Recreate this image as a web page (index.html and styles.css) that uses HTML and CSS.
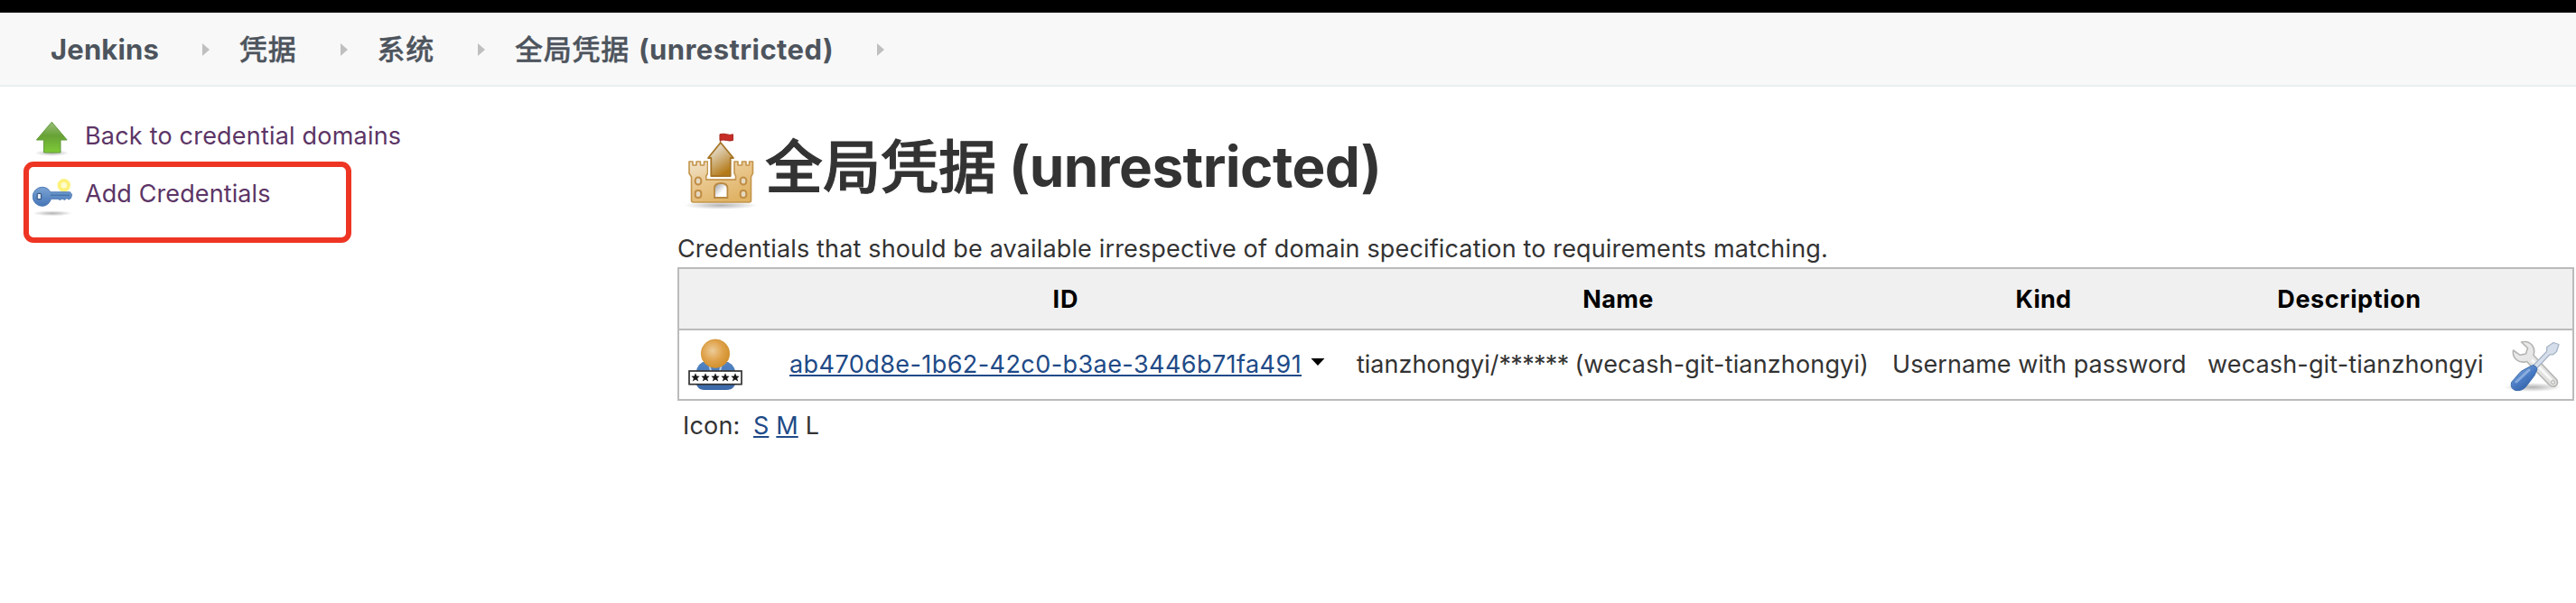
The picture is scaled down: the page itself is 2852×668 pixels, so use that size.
FILE: index.html
```html
<!DOCTYPE html>
<html lang="zh">
<head>
<meta charset="utf-8">
<title>全局凭据 (unrestricted) [Jenkins]</title>
<link rel="stylesheet" href="styles.css">
</head>
<body>
<div class="topbar"></div>
<nav class="breadcrumbs">
  <a class="crumb crumb-root">Jenkins</a>
  <i class="sep"></i>
  <a class="crumb cjk">凭据</a>
  <i class="sep"></i>
  <a class="crumb cjk">系统</a>
  <i class="sep"></i>
  <a class="crumb"><span class="cjk">全局凭据</span> <span class="crumb-latin">(unrestricted)</span></a>
  <i class="sep sep-last"></i>
</nav>
<div class="page">
  <aside class="side">
    <a class="task task-back">
      <svg width="44" height="44" viewBox="0 0 44 44">
        <defs>
          <linearGradient id="ga" x1="0" y1="0" x2="0" y2="1"><stop offset="0" stop-color="#9cbf7c"/><stop offset=".45" stop-color="#66a235"/><stop offset="1" stop-color="#7fcb37"/></linearGradient>
          <radialGradient id="sh"><stop offset="0" stop-color="#000" stop-opacity=".3"/><stop offset="1" stop-color="#000" stop-opacity="0"/></radialGradient>
        </defs>
        <ellipse cx="21.5" cy="39.5" rx="19" ry="3.5" fill="url(#sh)"/>
        <path d="M21.3 5.2 38.2 25H31v14H12.6V25H4.4Z" fill="url(#ga)" stroke="#629a3a" stroke-width="1" stroke-linejoin="round"/>
      </svg>
      <span>Back to credential domains</span>
    </a>
    <a class="task task-add">
      <svg width="46" height="52" viewBox="0 0 46 52">
        <defs><linearGradient id="gk" x1="0" y1="0" x2="0" y2="1"><stop offset="0" stop-color="#7ba3d3"/><stop offset="1" stop-color="#4676b8"/></linearGradient></defs>
        <ellipse cx="22" cy="46.3" rx="22" ry="3" fill="url(#sh)"/>
        <circle cx="34.8" cy="15.3" r="5.2" fill="#fffbd0" stroke="#fcf27a" stroke-width="4"/>
        <path d="M10.800 17.300c4.300 0 7.200 2.200 9 5.500H41.500L43.600 25.500 42.500 29.500 40 31 38 29.500 35.500 31.500 33 30 30.500 31.500 28 30.300H20.500C19 35 15.500 38.300 10.800 38.300A10.500 10.500 0 0 1 10.800 17.300Z" fill="url(#gk)" stroke="#4b78b4" stroke-width="1"/>
        <path d="M20 26.200H41" stroke="#416ca6" stroke-width="1.200"/>
        <rect x="5.200" y="24.300" width="4.400" height="6.400" rx="1" fill="#e9edf2" stroke="#3d5f8f" stroke-width="1.300"/>
      </svg>
      <span>Add Credentials</span>
    </a>
    <div class="highlight"></div>
  </aside>
  <main class="main">
    <h1>
      <svg width="80" height="86" viewBox="0 0 80 86">
        <defs>
          <linearGradient id="gt" x1="0" y1="0" x2=".5" y2="1"><stop offset="0" stop-color="#f4f0e8"/><stop offset=".35" stop-color="#dccdb0"/><stop offset="1" stop-color="#b57a17"/></linearGradient>
          <linearGradient id="gw" x1="0" y1="0" x2=".6" y2="1"><stop offset="0" stop-color="#f1e5cf"/><stop offset=".5" stop-color="#e9c68c"/><stop offset="1" stop-color="#e0b365"/></linearGradient>
          <linearGradient id="gd" x1="0" y1="0" x2="1" y2="1"><stop offset=".1" stop-color="#aaa"/><stop offset=".6" stop-color="#fff"/></linearGradient>
        </defs>
        <ellipse cx="40" cy="80.500" rx="41" ry="4.500" fill="url(#sh)"/>
        <path d="M39.500 2v10" stroke="#a56a4a" stroke-width="1.300"/>
        <path d="M39 1.800q4-1.200 7.500 0t7 0v6.700q-3.500 1-7 0t-7.500 0Z" fill="#c82c26" stroke="#aa2720" stroke-width="1"/>
        <path d="M5 32h4v4h4v-4h4.500v4h4v-4h4v13l-1.700 3v4H56.500v-4l-1.500-3V32h4v4h4.500v-4H68v4h3.500v-4h4v13l-2 4v26q0 2-2 2h-62q-2 0-2-2V49l-2.500-4Z" fill="url(#gw)" stroke="#c4944b" stroke-width="1.600" stroke-linejoin="round"/>
        <path d="M26 51.500V29h28v22.500Z" fill="#fff"/>
        <path d="M23.800 52H56.500" stroke="#c4944b" stroke-width="1.600"/>
        <path d="M39.800 11 54 28h-3.300v20H29.300V28H26Z" fill="url(#gt)" stroke="#a67425" stroke-width="1.800" stroke-linejoin="round"/>
        <path d="M33 72V61.500q0-5.500 7.200-5.500t7.200 5.500V72Z" fill="url(#gd)" stroke="#b88942" stroke-width="1.800"/>
        <g fill="#e5d9c2" stroke="#c08d43" stroke-width="2"><rect x="11.700" y="49.500" width="6.600" height="8" rx="3.300"/><rect x="11.700" y="64" width="6.600" height="8" rx="3"/><rect x="61.700" y="49.500" width="6.600" height="8" rx="3.300"/><rect x="61.700" y="64" width="6.600" height="8" rx="3"/></g>
      </svg>
      <span class="h-cjk">全局凭据</span> <span class="h-latin">(unrestricted)</span>
    </h1>
    <p class="intro">Credentials that should be available irrespective of domain specification to requirements matching.</p>
    <table class="creds">
      <colgroup><col class="c1"><col class="c2"><col class="c3"><col class="c4"><col class="c5"><col class="c6"></colgroup>
      <thead>
        <tr><th></th><th class="th-id">ID</th><th class="th-name">Name</th><th>Kind</th><th class="th-desc">Description</th><th></th></tr>
      </thead>
      <tbody>
        <tr>
          <td class="td-icon">
            <svg width="62" height="60" viewBox="0 0 62 60">
              <defs>
                <radialGradient id="gh" cx=".4" cy=".4" r=".6"><stop offset="0" stop-color="#edcc9a"/><stop offset=".6" stop-color="#dfa24a"/><stop offset="1" stop-color="#d3922f"/></radialGradient>
                <linearGradient id="gb" x1="0" y1="0" x2="0" y2="1"><stop offset="0" stop-color="#5285c4"/><stop offset="1" stop-color="#3b68a8"/></linearGradient>
                <path id="st" d="M0-5 1.300-1.800 4.700-1.600 2.100.700 3.200 4.200 0 2.300-3.200 4.200-2.100.700-4.700-1.600-1.300-1.800Z"/>
              </defs>
              <path d="M16 26H44Q53 30 53 44 53 57 42 57H18Q8 57 8 44 8 30 16 26Z" fill="url(#gb)"/>
              <path d="M23 28l2 8M37 28l-2 8" stroke="#b9cee8" stroke-width="2"/>
              <circle cx="30" cy="16.700" r="15.700" fill="url(#gh)" stroke="#cf9234" stroke-width=".8"/>
              <rect x="1" y="36" width="58" height="14.700" fill="#fff" stroke="#333" stroke-width="1.700"/>
              <g fill="#151515"><use href="#st" x="8" y="43.300"/><use href="#st" x="19" y="43.300"/><use href="#st" x="30" y="43.300"/><use href="#st" x="41" y="43.300"/><use href="#st" x="52" y="43.300"/></g>
            </svg>
          </td>
          <td class="td-id"><a class="id-link">ab470d8e-1b62-42c0-b3ae-3446b71fa491</a><svg class="caret" width="16" height="10" viewBox="0 0 16 10"><path d="M.5 1H15.500L8 9Z" fill="#000"/></svg></td>
          <td class="td-name">tianzhongyi/<span class="mask">****** </span><span class="alias">(wecash-git-tianzhongyi)</span></td>
          <td class="td-kind">Username with password</td>
          <td class="td-desc">wecash-git-tianzhongyi</td>
          <td class="td-tools">
            <svg width="66" height="62" viewBox="0 0 66 62">
              <defs>
                <linearGradient id="gs" x1="0" y1="0" x2="1" y2="1"><stop offset="0" stop-color="#ececec"/><stop offset="1" stop-color="#dcdcda"/></linearGradient>
                <linearGradient id="gn" x1=".2" y1=".1" x2=".8" y2=".9"><stop offset="0" stop-color="#7fa6da"/><stop offset=".5" stop-color="#4a7cc4"/><stop offset="1" stop-color="#2f5da5"/></linearGradient>
              </defs>
              <ellipse cx="32" cy="55" rx="32" ry="5" fill="url(#sh)"/>
              <path d="M19.500 5Q27 3 31.500 8.500 35 13.500 33 19.500L58.500 46.500Q61 50.500 57.500 53.500 54 55.500 50.500 52.500L25.500 26.500Q18.500 28.500 14 24.500 9.500 20.500 10.500 14L18 19.300 24.500 18 26.500 11.500Z" fill="url(#gs)" stroke="#b4b4b2" stroke-width="1.600" stroke-linejoin="round"/>
              <path d="M31 24.500 53 47" stroke="#f8f8f8" stroke-width="3"/>
              <circle cx="54.500" cy="49.500" r="1.800" fill="#f4f4f4" stroke="#aaa"/>
              <path d="M32.500 31 47.500 15.500 47.800 10.500 55 5.500 61 7.500 58.500 15.500 55 18.500 51 18.800 36 34.500Z" fill="#d5deea" stroke="#a7b4c6" stroke-width="1.300" stroke-linejoin="round"/>
              <path d="M30 31.500Q33 29 36 32.500 38 35.500 35.500 38.500L34 42 24.500 54.500Q20 59.500 13 58.500 7 56.500 8.500 49.500L19 37.500Z" fill="url(#gn)" stroke="#3f6cae" stroke-width="1"/>
              <path d="M14 49 28 36" stroke="#a5c3ea" stroke-width="3" stroke-linecap="round" opacity=".65"/>
            </svg>
          </td>
        </tr>
      </tbody>
    </table>
    <div class="sizes"><span class="sizes-label">Icon:</span><a>S</a><a>M</a><span>L</span></div>
  </main>
</div>
</body>
</html>
```
FILE: styles.css
```css
body {
  margin: 0;
  background: #fff;
  color: #333;
  font: 27px/36px Inter, "Noto Sans CJK SC", sans-serif;
}
svg { display: block; flex: none; }

.topbar { height: 14px; background: #000; }

.breadcrumbs {
  display: flex;
  align-items: center;
  box-sizing: border-box;
  height: 82px;
  padding: 2px 0 0 56px;
  background: #f8f8f8;
  border-bottom: 2px solid #e9eff3;
  color: #4d545d;
  font-size: 31px;
  font-weight: 700;
  line-height: 78px;
  white-space: nowrap;
}
.crumb-root { letter-spacing: .15px; width: 120px; }
.crumb { display: flex; }
.cjk { letter-spacing: .75px; font-weight: 500; -webkit-text-stroke: .4px; }
.crumb-latin { margin-left: 10px; letter-spacing: .43px; }
.sep {
  width: 0;
  height: 0;
  margin: 0 33px 0 48px;
  border: solid transparent;
  border-width: 7px 0 7px 8px;
  border-left-color: #bfbfbf;
}
.sep-last { margin-right: 0; }

.page { display: flex; }
.side {
  position: relative;
  width: 750px;
  flex: none;
  padding-top: 24px;
  color: #5c3566;
}
.task { display: flex; height: 64px; padding-left: 36px; line-height: 62px; }
.task span { margin-left: 14px; letter-spacing: .2px; }
.task-back svg { margin-top: 10px; }
.task-add svg { margin-top: 6px; }
.task-add span { margin-left: 12px; letter-spacing: .1px; }
.highlight {
  position: absolute;
  left: 26px;
  top: 83px;
  width: 351px;
  height: 78px;
  border: 6px solid #ee3524;
  border-radius: 11px;
}

.main { width: 2100px; padding-top: 51px; }
h1 {
  display: flex;
  height: 107px;
  margin: 0;
  padding-left: 8px;
  font-size: 62px;
  line-height: 76px;
  white-space: nowrap;
}
.h-cjk { margin-left: 9px; font-size: 64px; font-weight: 500; -webkit-text-stroke: 1px; }
.h-latin { margin-left: 14px; letter-spacing: -.57px; }
.intro {
  box-sizing: border-box;
  height: 42px;
  margin: 0;
  padding-top: 4px;
  letter-spacing: .149px;
  white-space: nowrap;
}

.creds {
  box-sizing: border-box;
  width: 2100px;
  table-layout: fixed;
  border-collapse: separate;
  border-spacing: 0;
  border: 2px solid #bbb;
  white-space: nowrap;
}
.c1 { width: 114px; }
.c2 { width: 628px; }
.c3 { width: 595px; }
.c4 { width: 347px; }
.c5 { width: 330px; }
.c6 { width: 82px; }
th {
  height: 68px;
  padding: 2px 0 0;
  box-sizing: border-box;
  background: #f0f0f0;
  border-bottom: 2px solid #bbb;
  color: #000;
  letter-spacing: .25px;
}
.th-id { letter-spacing: .9px; }
.th-name { letter-spacing: .37px; }
.th-desc { letter-spacing: .61px; }
td { height: 76px; padding: 0; box-sizing: border-box; }
.td-icon { padding: 2px 0 0 10px; }
.td-id { padding-left: 8px; }
.id-link {
  color: #204a87;
  letter-spacing: .43px;
  text-decoration: underline;
  text-decoration-thickness: 2px;
  text-underline-offset: 2px;
  text-decoration-skip-ink: none;
}
.caret { display: inline-block; margin-left: 10px; vertical-align: 7px; }
.td-name { padding-left: 8px; }
.mask { letter-spacing: -.7px; }
.alias { letter-spacing: .15px; }
.td-kind { padding-left: 6px; letter-spacing: .06px; }
.td-desc { padding-left: 8px; letter-spacing: .15px; }
.td-tools { padding: 2px 0 0 6px; }

.sizes { display: flex; padding: 10px 0 0 6px; }
.sizes-label { width: 78px; letter-spacing: .17px; }
.sizes a {
  margin-right: 8px;
  color: #204a87;
  text-decoration: underline;
  text-decoration-thickness: 2px;
  text-underline-offset: 2px;
}
```
